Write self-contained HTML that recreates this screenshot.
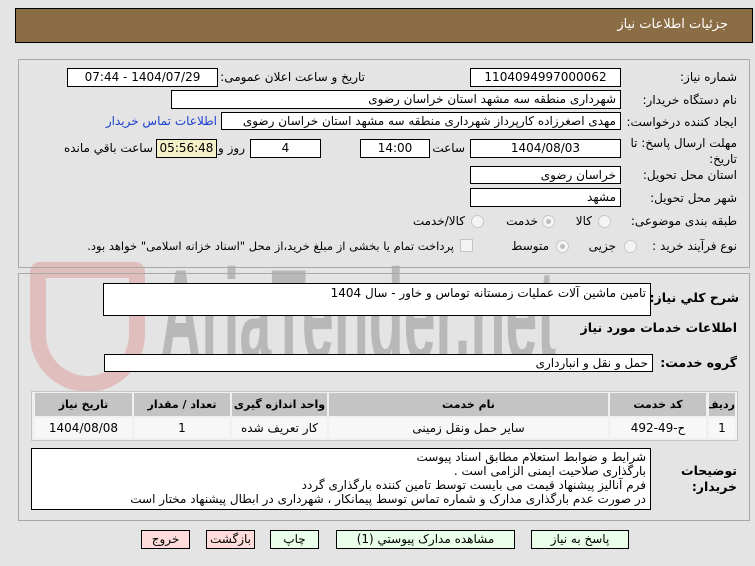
<!DOCTYPE html>
<html><head><meta charset="utf-8"><style>
*{box-sizing:border-box;margin:0;padding:0}
body{width:755px;height:566px;background:#e4e4e4;font-family:"DejaVu Sans","Liberation Sans",sans-serif;font-size:12px;color:#000;position:relative;overflow:hidden;direction:rtl}
.a{position:absolute;white-space:nowrap}
.in{position:absolute;background:#fff;border:1px solid #000;padding:0 4px;line-height:16px;font-size:12px;overflow:hidden;white-space:nowrap}
.c{text-align:center}
.lab{position:absolute;white-space:nowrap;font-size:12px}
.panel{position:absolute;border:1px solid #a8a8a8}
.rad{position:absolute;width:13px;height:13px;border-radius:50%;border:1px solid #c8c8c8;background:#f4f4f4}
.rad.on::after{content:"";position:absolute;left:3px;top:3px;width:5px;height:5px;border-radius:50%;background:#bdbdbd}
.b{font-weight:bold;font-size:12.5px}
.th{position:absolute;background:#c4c4c4;font-weight:bold;text-align:center;line-height:23px;font-size:11px;white-space:nowrap;overflow:hidden}
.td{position:absolute;background:#f7f7f7;text-align:center;line-height:20px;font-size:12px}
.btn{position:absolute;top:530px;height:19px;border:1px solid #000;text-align:center;line-height:17px;font-size:12px}
.g{background:#eaffea}.p{background:#ffdcdc}
</style></head><body>
<div class="a" style="left:15px;top:8px;width:738px;height:35px;background:#8b6d45;border:1px solid #000"></div>
<div class="a" style="right:27px;top:17px;color:#fff;font-size:13px">جزئیات اطلاعات نیاز</div>

<div class="a" style="left:160px;top:250px;font-size:130px;line-height:130px;color:rgba(130,130,130,0.45);font-family:'Liberation Sans';font-weight:bold;direction:ltr;transform:scaleX(0.44);transform-origin:left top">AriaTender.net</div>
<div class="a" style="left:30px;top:262px;width:115px;height:130px;border:16px solid rgba(220,120,120,0.35);border-radius:10px 10px 60px 60px"></div>

<div class="panel" style="left:18px;top:59px;width:732px;height:209px"></div>
<div class="lab" style="right:18px;top:70px">شماره نیاز:</div>
<div class="in c" style="left:470px;top:68px;width:151px;height:19px">1104094997000062</div>
<div class="lab" style="right:390px;top:70px">تاریخ و ساعت اعلان عمومی:</div>
<div class="in c" style="left:67px;top:68px;width:151px;height:19px">1404/07/29 - 07:44</div>

<div class="lab" style="right:18px;top:93px">نام دستگاه خریدار:</div>
<div class="in" style="left:171px;top:90px;width:450px;height:19px">شهرداری منطقه سه مشهد استان خراسان رضوی</div>

<div class="lab" style="right:18px;top:115px">ایجاد کننده درخواست:</div>
<div class="in" style="left:221px;top:112px;width:400px;height:18px">مهدی اصغرزاده کارپرداز شهرداری منطقه سه مشهد استان خراسان رضوی</div>
<div class="lab" style="right:538px;top:114px;color:#1a3fd0">اطلاعات تماس خریدار</div>

<div class="lab" style="right:18px;top:136px">مهلت ارسال پاسخ: تا</div>
<div class="lab" style="right:18px;top:152px">تاریخ:</div>
<div class="in c" style="left:470px;top:139px;width:151px;height:19px">1404/08/03</div>
<div class="lab" style="right:290px;top:141px">ساعت</div>
<div class="in c" style="left:360px;top:139px;width:70px;height:19px">14:00</div>
<div class="in c" style="left:250px;top:139px;width:71px;height:19px">4</div>
<div class="lab" style="right:510px;top:141px">روز و</div>
<div class="in c" style="left:156px;top:139px;width:61px;height:19px;background:#f5f0c8;padding:0">05:56:48</div>
<div class="lab" style="right:602px;top:141px">ساعت باقي مانده</div>

<div class="lab" style="right:18px;top:168px">استان محل تحویل:</div>
<div class="in" style="left:470px;top:166px;width:151px;height:18px">خراسان رضوی</div>
<div class="lab" style="right:18px;top:191px">شهر محل تحویل:</div>
<div class="in" style="left:470px;top:188px;width:151px;height:19px">مشهد</div>

<div class="lab" style="right:18px;top:214px">طبقه بندی موضوعی:</div>
<div class="rad" style="left:598px;top:215px"></div><div class="lab" style="right:163px;top:214px">کالا</div>
<div class="rad on" style="left:542px;top:215px"></div><div class="lab" style="right:217px;top:214px">خدمت</div>
<div class="rad" style="left:471px;top:215px"></div><div class="lab" style="right:290px;top:214px">کالا/خدمت</div>

<div class="lab" style="right:18px;top:239px">نوع فرآیند خرید :</div>
<div class="rad" style="left:624px;top:240px"></div><div class="lab" style="right:139px;top:239px">جزیی</div>
<div class="rad on" style="left:556px;top:240px"></div><div class="lab" style="right:206px;top:239px">متوسط</div>
<div class="a" style="left:460px;top:239px;width:13px;height:13px;border:1px solid #c4c4c4;background:#f4f4f4"></div>
<div class="lab" style="right:301px;top:239px;font-size:11.5px">پرداخت تمام یا بخشی از مبلغ خرید،از محل "اسناد خزانه اسلامی" خواهد بود.</div>

<div class="panel" style="left:18px;top:273px;width:732px;height:248px"></div>
<div class="lab b" style="right:16px;top:290px">شرح کلي نیاز:</div>
<div class="in" style="left:103px;top:283px;width:548px;height:33px;padding-top:1px">تامین ماشین آلات عملیات زمستانه توماس و خاور - سال 1404</div>
<div class="lab b" style="right:18px;top:320px">اطلاعات خدمات مورد نیاز</div>
<div class="lab b" style="right:18px;top:355px">گروه خدمت:</div>
<div class="in" style="left:104px;top:354px;width:549px;height:18px">حمل و نقل و انبارداری</div>

<div class="a" style="left:31px;top:391px;width:707px;height:50px;border:1px solid #c4c4c4;background:#f0f0f0"></div>
<div class="th" style="left:709px;top:393px;width:26px">ردیف</div>
<div class="th" style="left:610px;top:393px;width:96px">کد خدمت</div>
<div class="th" style="left:329px;top:393px;width:279px">نام خدمت</div>
<div class="th" style="left:232px;top:393px;width:95px">واحد اندازه گیری</div>
<div class="th" style="left:134px;top:393px;width:96px">تعداد / مقدار</div>
<div class="th" style="left:35px;top:393px;width:97px">تاریخ نیاز</div>
<div class="td" style="left:709px;top:418px;width:26px">1</div>
<div class="td" style="left:610px;top:418px;width:96px">ح-49-492</div>
<div class="td" style="left:329px;top:418px;width:279px">سایر حمل ونقل زمینی</div>
<div class="td" style="left:232px;top:418px;width:95px">کار تعریف شده</div>
<div class="td" style="left:134px;top:418px;width:96px">1</div>
<div class="td" style="left:35px;top:418px;width:97px">1404/08/08</div>

<div class="lab b" style="right:18px;top:463px">توضیحات</div>
<div class="lab b" style="right:18px;top:479px">خریدار:</div>
<div class="in" style="left:31px;top:448px;width:620px;height:62px;line-height:14px;white-space:normal;padding-top:1px">شرایط و ضوابط استعلام مطابق اسناد پیوست<br>بارگذاری صلاحیت ایمنی الزامی است .<br>فرم آنالیز پیشنهاد قیمت می بایست توسط تامین کننده بارگذاری گردد<br>در صورت عدم بارگذاری مدارک و شماره تماس توسط پیمانکار ، شهرداری در ابطال پیشنهاد مختار است</div>

<div class="btn g" style="left:531px;width:98px">پاسخ به نیاز</div>
<div class="btn g" style="left:336px;width:179px">مشاهده مدارک پیوستي (1)</div>
<div class="btn g" style="left:270px;width:49px">چاپ</div>
<div class="btn p" style="left:206px;width:49px">بازگشت</div>
<div class="btn p" style="left:141px;width:49px">خروج</div>
</body></html>
